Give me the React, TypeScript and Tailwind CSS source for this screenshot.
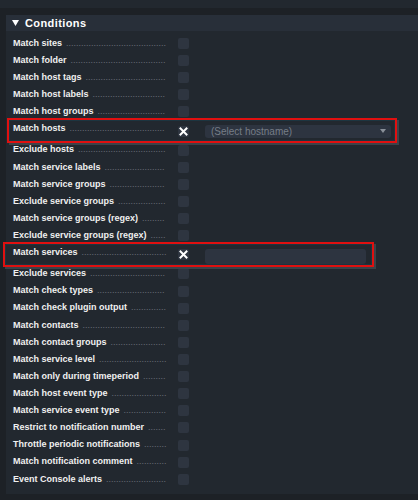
import { ReactNode } from 'react'

const ROWS: { label: string; mode?: 'hosts' | 'services' }[] = [
  { label: 'Match sites' },
  { label: 'Match folder' },
  { label: 'Match host tags' },
  { label: 'Match host labels' },
  { label: 'Match host groups' },
  { label: 'Match hosts', mode: 'hosts' },
  { label: 'Exclude hosts' },
  { label: 'Match service labels' },
  { label: 'Match service groups' },
  { label: 'Exclude service groups' },
  { label: 'Match service groups (regex)' },
  { label: 'Exclude service groups (regex)' },
  { label: 'Match services', mode: 'services' },
  { label: 'Exclude services' },
  { label: 'Match check types' },
  { label: 'Match check plugin output' },
  { label: 'Match contacts' },
  { label: 'Match contact groups' },
  { label: 'Match service level' },
  { label: 'Match only during timeperiod' },
  { label: 'Match host event type' },
  { label: 'Match service event type' },
  { label: 'Restrict to notification number' },
  { label: 'Throttle periodic notifications' },
  { label: 'Match notification comment' },
  { label: 'Event Console alerts' },
]

// Arial bold advance widths (em), enough for the labels above
const EM: Record<string, number> = {
  a: 0.556, b: 0.611, c: 0.556, d: 0.611, e: 0.556, f: 0.333, g: 0.611, h: 0.611, i: 0.278,
  k: 0.556, l: 0.278, m: 0.889, n: 0.611, o: 0.611, p: 0.611, r: 0.389, s: 0.556, t: 0.333,
  u: 0.611, v: 0.556, w: 0.778, x: 0.556, y: 0.556, ' ': 0.278, '(': 0.333, ')': 0.333,
  M: 0.833, E: 0.667, R: 0.722, T: 0.611, C: 0.722,
}

const leader = (label: string) => {
  const w = [...label].reduce((s, ch) => s + (EM[ch] ?? 0.6) * 9, 0)
  return '.'.repeat(Math.max(0, Math.floor((155 - 5 - w) / 2.5)))
}

function Checkbox({ checked }: { checked?: boolean }) {
  return (
    <span className="w-[11px] h-[11px] rounded-[2px] bg-[#2e3540] flex items-center justify-center shrink-0">
      {checked && (
        <svg width="9" height="9" viewBox="0 0 9 9">
          <path d="M1.5 1.5 L7.5 7.5 M7.5 1.5 L1.5 7.5" stroke="#ffffff" strokeWidth="2" strokeLinecap="square" />
        </svg>
      )}
    </span>
  )
}

// label with a dotted leader up to the checkbox column
function Label({ children }: { children: string }): ReactNode {
  return (
    <div className="w-[155px] h-[17px] flex items-center shrink-0">
      <span className="whitespace-nowrap text-[#f0f0f0] font-bold">{children}</span>
      <span className="ml-[4px] whitespace-nowrap text-[#6a7079] font-normal">{leader(children)}</span>
    </div>
  )
}

function Highlight({ className }: { className: string }) {
  return (
    <div
      className={`absolute pointer-events-none border-2 border-[#e01010] shadow-[2px_2px_0_#3c4249,inset_0_0_0_1px_#1c3540] ${className}`}
    />
  )
}

export default function App() {
  return (
    <div
      className="min-h-[500px] bg-[#1d2126] text-[9px]"
      style={{ fontFamily: '"Liberation Sans", Arial, sans-serif' }}
    >
      <div className="h-[8px] bg-[#22282f]" />
      <div className="ml-[6px] mt-[7px] bg-[#22282f] h-[479px]">
        <div className="h-[16px] bg-[#282f39] flex items-center pl-[6px] gap-[6px]">
          <svg width="7" height="6" viewBox="0 0 7 6">
            <path d="M0 0 H7 L3.5 6 Z" fill="#ffffff" />
          </svg>
          <span className="text-[11px] font-bold text-white tracking-[0.4px]">Conditions</span>
        </div>
        <div className="pt-[4px] pl-[7px]">
          {ROWS.map((r) =>
            r.mode ? (
              <div key={r.label} className="relative h-[21.1px] flex items-start">
                <Highlight
                  className={
                    r.mode === 'hosts'
                      ? '-top-[3px] h-[25px] -left-[6px] w-[390px]'
                      : '-top-[2px] h-[25px] -left-[10px] w-[371px]'
                  }
                />
                <Label>{r.label}</Label>
                <div className="ml-[10px] mt-[5px]">
                  <Checkbox checked />
                </div>
                {r.mode === 'hosts' ? (
                  <div className="ml-[16px] mt-[4px] w-[186px] h-[13px] rounded-[3px] bg-[#2d3440] flex items-center justify-between pl-[6px] pr-[5px]">
                    <span className="text-[#767d87] text-[10px]">(Select hostname)</span>
                    <svg width="6" height="4" viewBox="0 0 6 4">
                      <path d="M0 0 H6 L3 4 Z" fill="#8a9099" />
                    </svg>
                  </div>
                ) : (
                  <div className="ml-[16px] mt-[5px] w-[161px] h-[15px] rounded-[3px] bg-[#2d3440]" />
                )}
              </div>
            ) : (
              <div key={r.label} className="h-[17.12px] flex items-center">
                <Label>{r.label}</Label>
                <div className="ml-[10px]">
                  <Checkbox />
                </div>
              </div>
            )
          )}
        </div>
      </div>
    </div>
  )
}
